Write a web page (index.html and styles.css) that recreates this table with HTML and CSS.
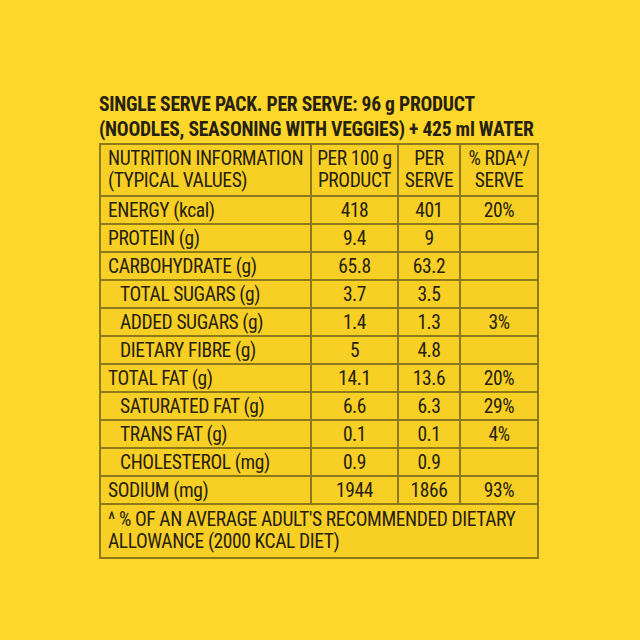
FILE: index.html
```html
<!DOCTYPE html>
<html lang="en">
<head>
<meta charset="utf-8">
<title>Nutrition Information</title>
<link rel="stylesheet" href="styles.css">
</head>
<body>
<main class="panel">
  <h1 class="title">SINGLE SERVE PACK. PER SERVE: 96 g PRODUCT<br>(NOODLES, SEASONING WITH VEGGIES) + 425 ml WATER</h1>
  <table class="facts">
    <colgroup>
      <col class="c-name">
      <col class="c-100">
      <col class="c-serve">
      <col class="c-rda">
    </colgroup>
    <thead>
      <tr class="head">
        <th class="name">NUTRITION INFORMATION<br>(TYPICAL VALUES)</th>
        <th>PER 100 g<br>PRODUCT</th>
        <th>PER<br>SERVE</th>
        <th>% RDA^/<br>SERVE</th>
      </tr>
    </thead>
    <tbody>
      <tr><td class="name">ENERGY (kcal)</td><td>418</td><td>401</td><td>20%</td></tr>
      <tr><td class="name">PROTEIN (g)</td><td>9.4</td><td>9</td><td></td></tr>
      <tr><td class="name">CARBOHYDRATE (g)</td><td>65.8</td><td>63.2</td><td></td></tr>
      <tr><td class="name sub">TOTAL SUGARS (g)</td><td>3.7</td><td>3.5</td><td></td></tr>
      <tr><td class="name sub">ADDED SUGARS (g)</td><td>1.4</td><td>1.3</td><td>3%</td></tr>
      <tr><td class="name sub">DIETARY FIBRE (g)</td><td>5</td><td>4.8</td><td></td></tr>
      <tr><td class="name">TOTAL FAT (g)</td><td>14.1</td><td>13.6</td><td>20%</td></tr>
      <tr><td class="name sub">SATURATED FAT (g)</td><td>6.6</td><td>6.3</td><td>29%</td></tr>
      <tr><td class="name sub">TRANS FAT (g)</td><td>0.1</td><td>0.1</td><td>4%</td></tr>
      <tr><td class="name sub">CHOLESTEROL (mg)</td><td>0.9</td><td>0.9</td><td></td></tr>
      <tr><td class="name">SODIUM (mg)</td><td>1944</td><td>1866</td><td>93%</td></tr>
      <tr class="foot"><td class="name" colspan="4">^ % OF AN AVERAGE ADULT'S RECOMMENDED DIETARY<br>ALLOWANCE (2000 KCAL DIET)</td></tr>
    </tbody>
  </table>
</main>
</body>
</html>
```
FILE: styles.css
```css
html, body {
  margin: 0;
  padding: 0;
  background: #ffd72a;
}
body {
  color: #262110;
  font-family: "Roboto Condensed", Roboto, "Liberation Sans", sans-serif;
}
.panel {
  width: 438px;
  margin-left: 99px;
  padding-top: 92px;
}
.title {
  margin: 0 0 1px;
  font-size: 19.6px;
  line-height: 25px;
  font-weight: 700;
  white-space: nowrap;
  letter-spacing: -0.25px;
}
.facts {
  width: 438px;
  table-layout: fixed;
  border-collapse: collapse;
  background: #f8cf24;
  border: 2px solid #8c7a1a;
  font-size: 19.5px;
  letter-spacing: -0.4px;
}
.c-name { width: 211px; }
.c-100 { width: 87px; }
.c-serve { width: 62px; }
.c-rda { width: 78px; }
.facts th,
.facts td {
  border: 2px solid #8c7a1a;
  padding: 0;
  text-align: center;
  vertical-align: middle;
  font-weight: 400;
  white-space: nowrap;
}
.head { height: 52px; }
.head th { line-height: 22px; }
.facts tbody tr { height: 28px; }
.facts .name {
  text-align: left;
  padding-left: 7px;
}
.facts .sub { padding-left: 19px; }
.facts .foot { height: 54px; }
.facts .foot td { line-height: 22px; }
```
